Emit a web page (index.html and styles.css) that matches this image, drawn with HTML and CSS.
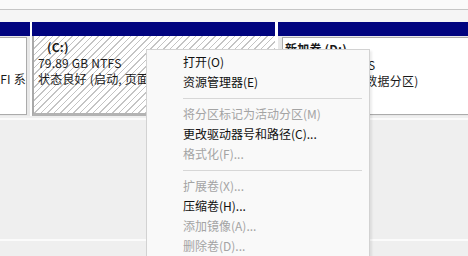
FILE: index.html
```html
<!DOCTYPE html>
<html>
<head>
<meta charset="utf-8">
<link rel="stylesheet" href="styles.css">
</head>
<body>
<div class="screen">
  <div class="toolbar"></div>
  <div class="subbar"></div>
  <div class="disk">
    <div class="part part-efi">
      <div class="head"></div>
      <div class="body">
        <div class="box">
          <div class="line">&nbsp;</div>
          <div class="line">100 MB</div>
          <div class="line">状态良好 (EFI 系统分区)</div>
        </div>
      </div>
    </div>
    <div class="part part-c">
      <div class="head"></div>
      <div class="body">
        <div class="line name">(C:)</div>
        <div class="line">79.89 GB NTFS</div>
        <div class="line">状态良好 (启动, 页面文件, 故障转储, 基本数据分区)</div>
      </div>
    </div>
    <div class="part part-d">
      <div class="head"></div>
      <div class="body">
        <div class="box">
          <div class="line name">新加卷 (D:)</div>
          <div class="line">158.36 GB NTFS</div>
          <div class="line">状态良好 (基本数据分区)</div>
        </div>
      </div>
    </div>
  </div>
  <div class="lower">
    <div class="lower-panel"></div>
    <div class="lower-rest"></div>
  </div>

  <div class="menu">
    <div class="item">打开(O)</div>
    <div class="item">资源管理器(E)</div>
    <div class="sep"></div>
    <div class="item disabled">将分区标记为活动分区(M)</div>
    <div class="item">更改驱动器号和路径(C)...</div>
    <div class="item disabled">格式化(F)...</div>
    <div class="sep"></div>
    <div class="item disabled">扩展卷(X)...</div>
    <div class="item">压缩卷(H)...</div>
    <div class="item disabled">添加镜像(A)...</div>
    <div class="item disabled">删除卷(D)...</div>
  </div>
</div>
</body>
</html>
```

FILE: styles.css
```css
html, body {
  margin: 0;
  padding: 0;
}
body {
  width: 468px;
  height: 256px;
  overflow: hidden;
  background: #efefef;
  font-family: "Noto Sans CJK SC", "Noto Sans", sans-serif;
  font-size: 12px;
  color: #1a1a1a;
}
.screen {
  position: relative;
  width: 468px;
  height: 256px;
  overflow: hidden;
}
.toolbar {
  height: 9px;
  background: #fafafa;
  border-bottom: 1px solid #c6c6c6;
}
.subbar {
  height: 12px;
  background: #f5f5f5;
}
.disk {
  display: flex;
  height: 94px;
  background: #ffffff;
}
.part {
  display: flex;
  flex-direction: column;
  flex: none;
}
.head {
  height: 14px;
  background: #01047f;
  flex: none;
}
.body {
  flex: 1;
  overflow: hidden;
  white-space: nowrap;
}
.line {
  height: 16px;
  line-height: 16px;
  letter-spacing: 0.2px;
}
.name {
  font-weight: bold;
}

.part-efi {
  width: 130px;
  margin-left: -100px;
}
.part-efi .body {
  background: #e8e8e8;
  padding: 1px 3px 1px 3px;
}
.part-efi .box {
  height: 100%;
  box-sizing: border-box;
  background: #ffffff;
  border: 1px solid #ababab;
  padding: 1px 0 0 33px;
  overflow: hidden;
}

.part-c {
  width: 243px;
  margin-left: 2px;
}
.part-c .body {
  border-left: 2px solid #a9a9a9;
  border-bottom: 3px solid #b3b3b3;
  padding: 3px 0 0 4px;
  background: repeating-linear-gradient(135deg, #ffffff 0 3.6px, #c4c4c4 3.6px 4.6px);
}
.part-c .name {
  padding-left: 9px;
}

.part-d {
  flex: 1;
  margin-left: 3px;
}
.part-d .body {
  background: #e8e8e8;
  padding: 1px 0 1px 4px;
}
.part-d .box {
  height: 100%;
  box-sizing: border-box;
  background: #ffffff;
  border: 1px solid #ababab;
  border-right: none;
  padding: 3px 0 0 2px;
}

.lower {
  display: flex;
  flex-direction: column;
}
.lower-panel {
  height: 119px;
  background: #efefef;
  border-top: 2px solid #fbfbfb;
  border-bottom: 2px solid #fbfbfb;
  margin-top: 2px;
}
.lower-rest {
  height: 20px;
  background: #efefef;
}

.menu {
  position: absolute;
  left: 146px;
  top: 49px;
  width: 222px;
  height: 220px;
  background: #f9f9f9;
  border: 1px solid #d2d2d2;
  box-shadow: 2px 2px 2px rgba(0, 0, 0, 0.08);
  padding-top: 2px;
}
.item {
  height: 20px;
  line-height: 20px;
  padding-left: 36px;
  color: #111111;
  white-space: nowrap;
}
.item.disabled {
  color: #a4a4a4;
}
.sep {
  height: 1px;
  margin: 6px 7px 5px 36px;
  background: #d7d7d7;
}
```
